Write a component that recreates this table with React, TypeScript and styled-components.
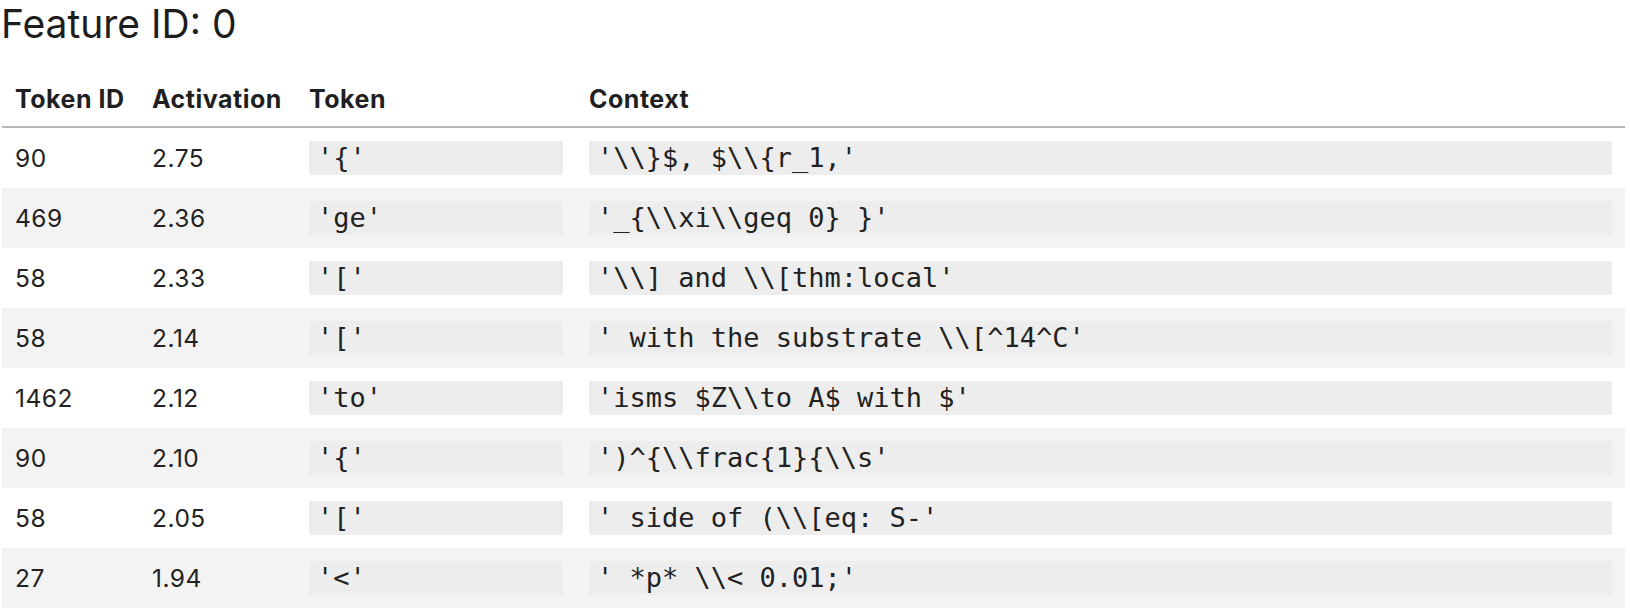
import React from 'react';
import styled, { createGlobalStyle } from 'styled-components';

const GlobalStyle = createGlobalStyle`
  html, body {
    margin: 0;
    padding: 0;
    background: #ffffff;
  }
  body {
    font-family: Inter, "Noto Sans", "Liberation Sans", sans-serif;
    color: #222222;
  }
`;

interface Row {
  id: number;
  activation: string;
  token: string;
  context: string;
}

const rows: Row[] = [
  { id: 90, activation: '2.75', token: "'{'", context: "'\\\\}$, $\\\\{r_1,'" },
  { id: 469, activation: '2.36', token: "'ge'", context: "'_{\\\\xi\\\\geq 0} }'" },
  { id: 58, activation: '2.33', token: "'['", context: "'\\\\] and \\\\[thm:local'" },
  { id: 58, activation: '2.14', token: "'['", context: "' with the substrate \\\\[^14^C'" },
  { id: 1462, activation: '2.12', token: "'to'", context: "'isms $Z\\\\to A$ with $'" },
  { id: 90, activation: '2.10', token: "'{'", context: "')^{\\\\frac{1}{\\\\s'" },
  { id: 58, activation: '2.05', token: "'['", context: "' side of (\\\\[eq: S-'" },
  { id: 27, activation: '1.94', token: "'<'", context: "' *p* \\\\< 0.01;'" },
];

const Page = styled.div`
  display: flex;
  flex-direction: column;
`;

const Title = styled.h2`
  margin: 0 0 0 1px;
  font-size: 39px;
  line-height: 48px;
  font-weight: 400;
  color: #1d1d1d;
`;

const Table = styled.div`
  margin: 18px 5px 0 2px;
  display: flex;
  flex-direction: column;
`;

const HeadRow = styled.div`
  display: grid;
  grid-template-columns: 137px 157px 280px 1fr;
  align-items: end;
  padding: 18px 0 12px;
  border-bottom: 2px solid #b9b9b9;
`;

const GridRow = styled.div<{ $striped?: boolean }>`
  display: grid;
  grid-template-columns: 137px 157px 280px 1fr;
  align-items: center;
  height: 60px;
  background: ${(p) => (p.$striped ? '#f3f3f3' : '#ffffff')};
`;

const HeadCell = styled.div`
  padding: 0 13px;
  font-size: 25px;
  line-height: 30px;
  font-weight: 700;
  letter-spacing: 0.5px;
  color: #1f1f1f;
  white-space: nowrap;
`;

const Cell = styled.div`
  padding: 0 13px;
  font-size: 24.5px;
  letter-spacing: 0.5px;
  color: #222222;
  white-space: nowrap;
`;

const Code = styled.div`
  height: 34px;
  line-height: 34px;
  padding: 0 8px;
  background: #ededed;
  font-family: "DejaVu Sans Mono", "Liberation Mono", monospace;
  font-size: 27px;
  letter-spacing: 0;
  color: #222222;
  white-space: pre;
  overflow: hidden;
`;

export default function App() {
  return (
    <Page>
      <GlobalStyle />
      <Title>Feature ID: 0</Title>
      <Table>
        <HeadRow>
          <HeadCell>Token ID</HeadCell>
          <HeadCell>Activation</HeadCell>
          <HeadCell>Token</HeadCell>
          <HeadCell>Context</HeadCell>
        </HeadRow>
        {rows.map((r, i) => (
          <GridRow key={i} $striped={i % 2 === 1}>
            <Cell>{r.id}</Cell>
            <Cell>{r.activation}</Cell>
            <Cell>
              <Code>{r.token}</Code>
            </Cell>
            <Cell>
              <Code>{r.context}</Code>
            </Cell>
          </GridRow>
        ))}
      </Table>
    </Page>
  );
}
